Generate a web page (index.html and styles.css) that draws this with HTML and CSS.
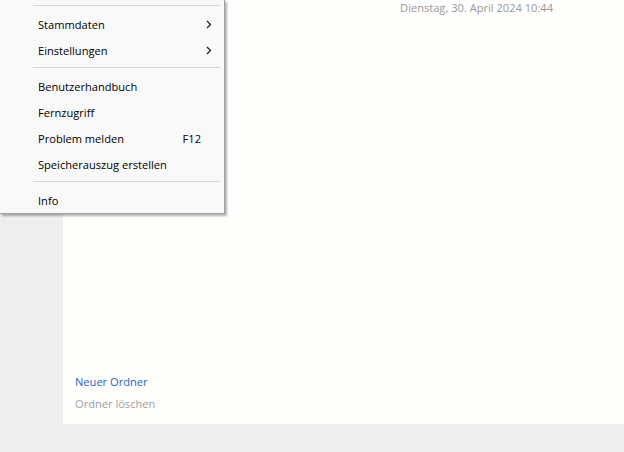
FILE: index.html
```html
<!DOCTYPE html>
<html lang="de">
<head>
<meta charset="utf-8">
<link rel="stylesheet" href="styles.css">
</head>
<body>
<div class="app">
  <div class="sidebar"></div>
  <div class="main">
    <div class="date">Dienstag, 30. April 2024 10:44</div>
    <div class="spacer"></div>
    <div class="actions">
      <a class="link">Neuer Ordner</a>
      <span class="link disabled">Ordner löschen</span>
    </div>
  </div>
</div>
<div class="menu">
  <div class="sep first"></div>
  <div class="item"><span>Stammdaten</span><svg class="chev" width="6" height="9" viewBox="0 0 6 9"><polyline points="1,1 4.5,4.5 1,8" fill="none" stroke="#222" stroke-width="1.3"/></svg></div>
  <div class="item"><span>Einstellungen</span><svg class="chev" width="6" height="9" viewBox="0 0 6 9"><polyline points="1,1 4.5,4.5 1,8" fill="none" stroke="#222" stroke-width="1.3"/></svg></div>
  <div class="sep"></div>
  <div class="item"><span>Benutzerhandbuch</span></div>
  <div class="item"><span>Fernzugriff</span></div>
  <div class="item"><span>Problem melden</span><span class="key">F12</span></div>
  <div class="item"><span>Speicherauszug erstellen</span></div>
  <div class="sep"></div>
  <div class="item"><span>Info</span></div>
</div>
</body>
</html>
```

FILE: styles.css
```css
html, body {
  margin: 0;
  padding: 0;
}
body {
  width: 624px;
  height: 452px;
  background: #eeeeee;
  font-family: "Open Sans", "Noto Sans", sans-serif;
  font-size: 11.1px;
  position: relative;
  overflow: hidden;
}
.app {
  display: flex;
  height: 424px;
}
.sidebar {
  width: 63px;
  flex: none;
}
.main {
  flex: 1;
  background: #fefefd;
  display: flex;
  flex-direction: column;
  padding: 0 12px 12px 12px;
}
.date {
  align-self: flex-end;
  margin-right: 59px;
  color: #999999;
  line-height: 16px;
}
.spacer { flex: 1; }
.actions {
  display: flex;
  flex-direction: column;
  gap: 6px;
}
.link {
  color: #2a5fc9;
  line-height: 16px;
}
.link.disabled {
  color: #a0a0a0;
}
.menu {
  position: absolute;
  left: 0;
  top: 0;
  width: 224px;
  background: #f9f9f9;
  border-right: 1px solid #a0a0a0;
  border-bottom: 1px solid #a0a0a0;
  box-shadow: 2px 2px 2px rgba(0,0,0,0.3);
}
.sep {
  height: 1px;
  background: #d7d7d7;
  margin: 4px 4px 5px 33px;
}
.sep.first {
  margin-top: 5px;
  margin-bottom: 5px;
}
.item {
  height: 26px;
  display: flex;
  align-items: center;
  justify-content: space-between;
  padding: 0 23px 0 38px;
  color: #000000;
}
.chev {
  margin-right: -11px;
  margin-top: 1px;
}
```
